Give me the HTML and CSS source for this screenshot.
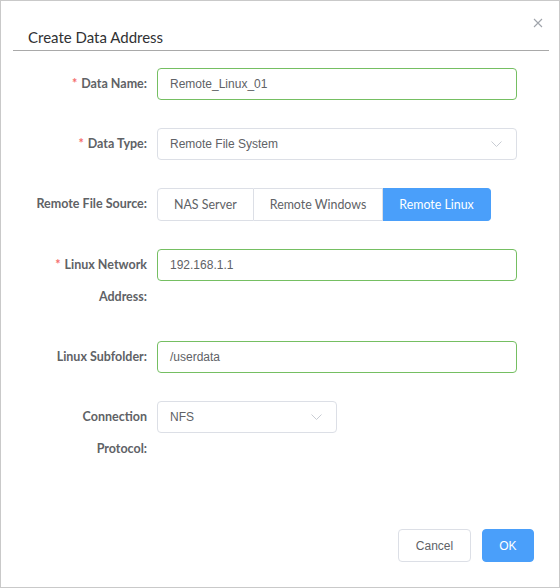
FILE: index.html
```html
<!DOCTYPE html>
<html>
<head>
<meta charset="utf-8">
<link rel="stylesheet" href="styles.css">
</head>
<body>
<div class="dialog">
  <div class="header">
    <span class="title">Create Data Address</span>
  </div>
  <button class="close" aria-label="Close">
    <svg width="10" height="10" viewBox="0 0 10 10"><path d="M1 1L9 9M9 1L1 9" stroke="#a0a4ab" stroke-width="1.1" fill="none"/></svg>
  </button>
  <div class="form">
    <div class="item">
      <label class="label"><span class="req">*</span>Data Name:</label>
      <div class="control"><div class="input ok">Remote_Linux_01</div></div>
    </div>
    <div class="item">
      <label class="label"><span class="req">*</span>Data Type:</label>
      <div class="control"><div class="input select">Remote File System<svg class="arrow" width="11" height="6" viewBox="0 0 11 6"><path d="M0.5 0.5L5.5 5.5L10.5 0.5" stroke="#c8ccd3" stroke-width="1" fill="none"/></svg></div></div>
    </div>
    <div class="item">
      <label class="label">Remote File Source:</label>
      <div class="control">
        <div class="seg">
          <span class="seg-btn">NAS Server</span>
          <span class="seg-btn">Remote Windows</span>
          <span class="seg-btn active">Remote Linux</span>
        </div>
      </div>
    </div>
    <div class="item">
      <label class="label"><span class="req">*</span>Linux Network<br>Address:</label>
      <div class="control"><div class="input ok">192.168.1.1</div></div>
    </div>
    <div class="item">
      <label class="label">Linux Subfolder:</label>
      <div class="control"><div class="input ok">/userdata</div></div>
    </div>
    <div class="item">
      <label class="label">Connection<br>Protocol:</label>
      <div class="control"><div class="input select small">NFS<svg class="arrow" width="11" height="6" viewBox="0 0 11 6"><path d="M0.5 0.5L5.5 5.5L10.5 0.5" stroke="#c8ccd3" stroke-width="1" fill="none"/></svg></div></div>
    </div>
  </div>
  <div class="footer">
    <button class="btn">Cancel</button>
    <button class="btn primary">OK</button>
  </div>
</div>
</body>
</html>
```
FILE: styles.css
```css
html, body {
  margin: 0;
  padding: 0;
  background: #fff;
}
.dialog {
  position: relative;
  box-sizing: border-box;
  width: 560px;
  height: 588px;
  border: 1px solid #c9c9c9;
  background: #fff;
  display: flex;
  flex-direction: column;
  font-family: Lato, "Liberation Sans", sans-serif;
}
.header {
  margin: 0 10px 0 12px;
  padding: 26px 0 3px 15px;
  border-bottom: 1px solid #a9a9a9;
  line-height: 20px;
}
.title {
  font-size: 15px;
  color: #303133;
}
.close {
  position: absolute;
  top: 17px;
  right: 16px;
  width: 10px;
  height: 10px;
  padding: 0;
  border: 0;
  background: none;
  display: flex;
}
.form {
  flex: 1;
  padding: 17px 42px 0 16px;
}
.item {
  display: flex;
  gap: 10px;
  margin-bottom: 28px;
}
.label {
  width: 130px;
  flex: none;
  text-align: right;
  font-size: 12.5px;
  font-weight: 700;
  line-height: 32px;
  color: #606266;
}
.req {
  color: #f56c6c;
  margin-right: 4px;
}
.control {
  flex: 1;
}
.input {
  box-sizing: border-box;
  height: 32px;
  border: 1px solid #dcdfe6;
  border-radius: 4px;
  padding: 0 12px;
  line-height: 30px;
  font-family: "Liberation Sans", Arial, sans-serif;
  font-size: 12px;
  color: #606266;
  display: flex;
  align-items: center;
}
.input.ok {
  border-color: #75bf62;
}
.select {
  justify-content: space-between;
}
.select .arrow {
  margin-right: 2px;
}
.small {
  width: 180px;
}
.seg {
  display: inline-flex;
  height: 33px;
}
.seg-btn {
  box-sizing: border-box;
  height: 33px;
  padding: 0 16px;
  border: 1px solid #dcdfe6;
  border-left: 0;
  font-size: 12.4px;
  line-height: 31px;
  color: #606266;
}
.seg-btn:first-child {
  border-left: 1px solid #dcdfe6;
  border-radius: 4px 0 0 4px;
}
.seg-btn.active {
  background: #4a9ffa;
  border-color: #4a9ffa;
  color: #fff;
  border-radius: 0 4px 4px 0;
}
.footer {
  display: flex;
  justify-content: flex-end;
  gap: 11px;
  padding: 0 25px 25px 0;
}
.btn {
  box-sizing: border-box;
  height: 33px;
  padding: 0 16.5px;
  border: 1px solid #dcdfe6;
  border-radius: 4px;
  background: #fff;
  font-family: "Liberation Sans", Arial, sans-serif;
  font-size: 12px;
  color: #606266;
}
.btn.primary {
  background: #4a9ffa;
  border-color: #4a9ffa;
  color: #fff;
}
```
